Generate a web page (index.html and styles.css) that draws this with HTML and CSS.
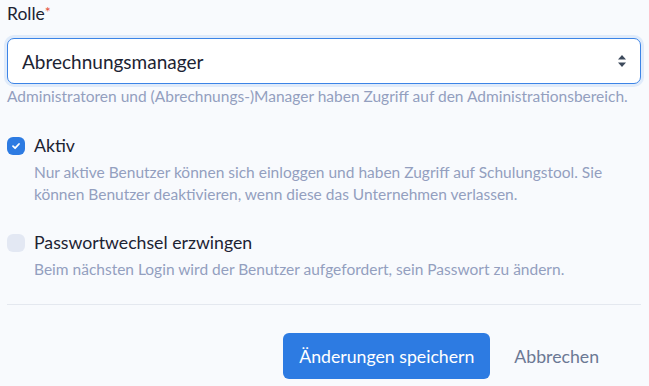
FILE: index.html
```html
<!DOCTYPE html>
<html lang="de">
<head>
    <meta charset="UTF-8">
    <meta name="viewport" content="width=device-width, initial-scale=1.0">
    <title>Benutzer bearbeiten</title>
    <link rel="stylesheet" href="styles.css">
</head>
<body>
    <form class="user-form">
        <div class="field">
            <label class="field-label" for="role">Rolle<span class="required">*</span></label>
            <div class="select-wrap">
                <select id="role" class="select">
                    <option>Abrechnungsmanager</option>
                </select>
                <svg class="select-arrows" width="10" height="14" viewBox="0 0 10 14">
                    <path d="M5 1 L9 5.5 H1 Z" fill="#3d4a5c"/>
                    <path d="M5 13 L9 8.5 H1 Z" fill="#3d4a5c"/>
                </svg>
            </div>
            <p class="hint">Administratoren und (Abrechnungs-)Manager haben Zugriff auf den Administrationsbereich.</p>
        </div>

        <div class="check-row">
            <span class="checkbox checked">
                <svg width="10" height="10" viewBox="0 0 10 10"><path d="M2 5.2 L4.1 7.2 L8 3" fill="none" stroke="#fff" stroke-width="1.8" stroke-linecap="round" stroke-linejoin="round"/></svg>
            </span>
            <div class="check-text">
                <div class="check-label">Aktiv</div>
                <p class="hint">Nur aktive Benutzer können sich einloggen und haben Zugriff auf Schulungstool. Sie können Benutzer deaktivieren, wenn diese das Unternehmen verlassen.</p>
            </div>
        </div>

        <div class="check-row">
            <span class="checkbox"></span>
            <div class="check-text">
                <div class="check-label">Passwortwechsel erzwingen</div>
                <p class="hint">Beim nächsten Login wird der Benutzer aufgefordert, sein Passwort zu ändern.</p>
            </div>
        </div>

        <div class="actions">
            <button type="button" class="btn-primary">Änderungen speichern</button>
            <button type="button" class="btn-link">Abbrechen</button>
        </div>
    </form>
</body>
</html>
```

FILE: styles.css
```css
* {
    margin: 0;
    padding: 0;
    box-sizing: border-box;
    font-family: "Lato", "Noto Sans", sans-serif;
}

body {
    background: #f8fafd;
    color: #1c2333;
    padding: 0 8px 0 7px;
}

.user-form {
    width: 634px;
}

.field-label {
    display: block;
    font-size: 17.5px;
    line-height: 20px;
    padding-top: 4px;
    margin-bottom: 14px;
}

.required {
    color: #e5533d;
    font-size: 14px;
    vertical-align: top;
    position: relative;
    top: -2px;
}

.select-wrap {
    position: relative;
}

.select {
    appearance: none;
    width: 100%;
    height: 46px;
    padding: 0 14px;
    font-size: 19px;
    color: #1c2333;
    background: #fff;
    border: 1.5px solid #3c84e6;
    border-radius: 7px;
    box-shadow: 0 0 0 3px rgba(60, 132, 230, 0.12);
    outline: none;
}

.select-arrows {
    position: absolute;
    right: 14px;
    top: 16px;
}

.hint {
    font-size: 15.5px;
    line-height: 21px;
    color: #939fbf;
    margin-top: 2px;
}

.check-row {
    display: flex;
    gap: 9px;
    margin-top: 28px;
}

.check-row + .check-row {
    margin-top: 27px;
}

.checkbox {
    flex: none;
    width: 18px;
    height: 18px;
    margin-top: 2px;
    border-radius: 6px;
    background: #e3e8f3;
    display: flex;
    align-items: center;
    justify-content: center;
}

.checkbox.checked {
    background: #2d7be2;
}

.check-label {
    font-size: 17.7px;
    line-height: 22px;
}

.check-text .hint {
    margin-top: 4px;
    line-height: 22px;
}

.actions {
    border-top: 1px solid #e4e8ef;
    margin-top: 24px;
    padding-top: 28px;
    display: flex;
    justify-content: flex-end;
    align-items: center;
    gap: 24px;
    padding-right: 42px;
}

.btn-primary {
    height: 46px;
    width: 207px;
    font-size: 17.7px;
    color: #fff;
    background: #2d7be2;
    border: none;
    border-radius: 6px;
    cursor: pointer;
}

.btn-link {
    font-size: 17.7px;
    color: #6b7894;
    background: none;
    border: none;
    cursor: pointer;
}
```
